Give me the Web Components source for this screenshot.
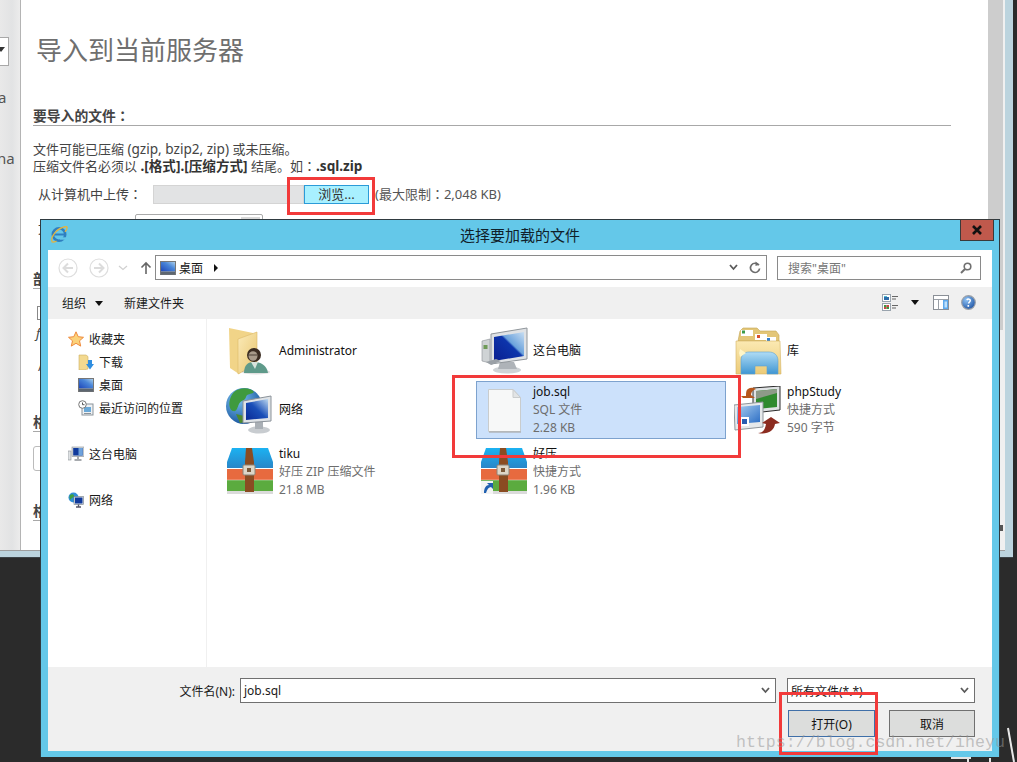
<!DOCTYPE html>
<html lang="zh">
<head>
<meta charset="utf-8">
<title>选择要加载的文件</title>
<style>
  html, body { margin: 0; height: 100%; background: #2b2b2b; overflow: hidden; }
  body { font-family: "Noto Sans", "Noto Sans CJK SC", sans-serif; font-size: 12px; color: #1a1a1a; }
</style>
</head>
<body>
<desk-top>
  <browser-window>
    <import-panel></import-panel>
  </browser-window>

  <file-dialog heading="选择要加载的文件"></file-dialog>

  <red-mark x="287" y="177" w="88" h="38"></red-mark>
  <red-mark x="452" y="375" w="289" h="83"></red-mark>
  <red-mark x="779" y="692" w="99" h="63"></red-mark>
</desk-top>

<script>
// icons are all hand drawn, 16px ones for the tree and 48px ones for the tiles
const ZIP_BODY = `<defs><linearGradient id="z" x1="0" y1="0" x2="0" y2="1"><stop offset="0" stop-color="#1bb2f2"/><stop offset="1" stop-color="#2a86c8"/></linearGradient></defs><path d="M6 0h36l5 14v6H1v-6z" fill="url(#z)"/><rect x="1" y="21" width="46" height="11" fill="#e76a3f"/><rect x="1" y="32" width="46" height="11" fill="#5bab3f"/><rect x="1" y="43" width="46" height="3" fill="#000" opacity=".14"/><path d="M1 20.500h46M1 32h46" stroke="#fff" stroke-width=".8" opacity=".5"/><path d="M20 0h6l2 14v30h-9V14z" fill="#8a4c22"/><rect x="17" y="17" width="12" height="10" rx="1" fill="#ddd6c8" stroke="#8c8478"/><rect x="21" y="20" width="4" height="4" fill="#7a5a3a"/>`;

const ICONS = {
  ie: `<svg viewBox="0 0 18 18" width="18" height="18"><circle cx="9" cy="9.500" r="6.200" fill="none" stroke="#2f7fc0" stroke-width="2.600"/><path d="M3 9.500h12" stroke="#2f7fc0" stroke-width="2"/><path d="M10 13.500h6" stroke="#64c8e9" stroke-width="2.400"/><path d="M2 16C.5 13 5 6 10 3.500 14 1.500 17 1 17 2.500c.3 1.300-1 3-2 4.200" fill="none" stroke="#e3b341" stroke-width="1.400"/><path d="M1.500 16.500c1 1 3 .5 5-.4" fill="none" stroke="#e3b341" stroke-width="1.400"/></svg>`,
  back: `<svg viewBox="0 0 20 20" width="20" height="20"><circle cx="10" cy="10" r="9" fill="#fff" stroke="#dedede" stroke-width="1.200"/><path d="M15 10H6M10 5.500 5.500 10l4.500 4.500" fill="none" stroke="#dcdcdc" stroke-width="2"/></svg>`,
  forward: `<svg viewBox="0 0 20 20" width="20" height="20"><circle cx="10" cy="10" r="9" fill="#fff" stroke="#dedede" stroke-width="1.200"/><path d="M5 10h9M10 5.500l4.500 4.500-4.500 4.500" fill="none" stroke="#dcdcdc" stroke-width="2"/></svg>`,
  down: `<svg viewBox="0 0 10 6" width="10" height="6"><path d="M1 1l4 3.500L9 1" fill="none" stroke="#d0d0d0" stroke-width="1.200"/></svg>`,
  up: `<svg viewBox="0 0 12 14" width="12" height="14"><path d="M6 13V2M1.500 6.500 6 2l4.500 4.500" fill="none" stroke="#666" stroke-width="1.600"/></svg>`,
  desk: `<svg viewBox="0 0 16 14" width="16" height="14"><defs><linearGradient id="d" x1="0" y1="1" x2="1" y2="0"><stop offset="0" stop-color="#1d45b8"/><stop offset=".6" stop-color="#4a86d8"/><stop offset="1" stop-color="#a8cdea"/></linearGradient></defs><rect x=".5" y=".5" width="15" height="13" fill="#eee" stroke="#777"/><rect x="1" y="1" width="14" height="9.500" fill="url(#d)"/><rect x="1" y="10.500" width="14" height="3" fill="#5d6670"/></svg>`,
  chev: `<svg viewBox="0 0 9 7" width="9" height="7"><path d="M1 1l3.500 4L8 1" fill="none" stroke="#5a5a5a" stroke-width="1.800"/></svg>`,
  refresh: `<svg viewBox="0 0 12 13" width="12" height="13"><path d="M9.800 4.200A4.600 4.600 0 1 0 10.600 7.500" fill="none" stroke="#6c6c6c" stroke-width="1.700"/><path d="M6.500 .5v4.500l4-1.500z" fill="#6c6c6c"/></svg>`,
  search: `<svg viewBox="0 0 12 12" width="12" height="12"><circle cx="7.500" cy="4.500" r="3.300" fill="none" stroke="#707070" stroke-width="1.600"/><path d="M5 7L1 11" stroke="#707070" stroke-width="2"/></svg>`,
  views: `<svg viewBox="0 0 17 17" width="17" height="17"><rect x=".5" y=".5" width="8" height="7" fill="#fff" stroke="#9aa4ae"/><rect x="2" y="3" width="5" height="3" fill="#2d6ca8"/><rect x="2" y="2" width="3" height="1" fill="#4fc0d8"/><rect x=".5" y="9.500" width="8" height="7" fill="#fff" stroke="#9aa4ae"/><rect x="2" y="11" width="2.500" height="2" fill="#3a9a40"/><rect x="4.500" y="11" width="2.500" height="2" fill="#c44"/><rect x="2" y="13" width="2.500" height="2" fill="#c44"/><rect x="4.500" y="13" width="2.500" height="2" fill="#3a9a40"/><path d="M10 2.500h6M10 5h4M10 11.500h6M10 14h4" stroke="#666"/></svg>`,
  pane: `<svg viewBox="0 0 16 15" width="16" height="15"><rect x=".5" y=".5" width="15" height="14" fill="#fff" stroke="#8a8f96"/><path d="M1 4.500h14M5.500 4.500V14.500" stroke="#9a9fa6"/><rect x="10" y="5" width="5" height="9" fill="#5ea9ec"/><rect x="11.500" y="6.500" width="2.500" height="6" fill="#bfe0fa"/></svg>`,
  help: `<svg viewBox="0 0 15 15" width="15" height="15"><defs><radialGradient id="h" cx=".35" cy=".3" r=".8"><stop offset="0" stop-color="#8fc3f5"/><stop offset="1" stop-color="#1a4fa0"/></radialGradient></defs><circle cx="7.500" cy="7.500" r="6.800" fill="url(#h)" stroke="#9aa0a8" stroke-width="1.200"/><path d="M5.800 5c1-1.500 3.700-1 3.500.7-.1 1.100-1.500 1.400-1.800 2.800" fill="none" stroke="#fff" stroke-width="1.500"/><rect x="6.500" y="10" width="1.600" height="1.800" fill="#fff"/></svg>`,
  star: `<svg viewBox="0 0 16 16" width="16" height="16"><path d="M8 .8l2.200 4.900 5.300.6-4 3.500 1.200 5.300L8 12.300 3.300 15.100l1.200-5.300-4-3.500 5.300-.6z" fill="#fbd27a" stroke="#ee8a3c" stroke-width="1"/></svg>`,
  dl: `<svg viewBox="0 0 16 16" width="16" height="16"><path d="M1 1h7l2 1.500V15L5 16H1z" fill="#f3d98f" stroke="#cfae62" stroke-width=".6"/><path d="M10 6h4v4h2l-4 5.500L8 10h2z" fill="#2f8ee0"/></svg>`,
  recent: `<svg viewBox="0 0 16 16" width="16" height="16"><rect x="4" y="4" width="11" height="11" fill="#eef1f4" stroke="#8b939a"/><rect x="6" y="7" width="7" height="5" fill="#6aa9d8"/><path d="M6 13.500h7" stroke="#8b939a"/><circle cx="4.500" cy="4.500" r="3.800" fill="#fff" stroke="#777"/><path d="M4.500 2.500v2.200H6.500" fill="none" stroke="#555"/></svg>`,
  pc: `<svg viewBox="0 0 16 16" width="16" height="16"><rect x="0" y="5" width="3" height="9" fill="#dfe2e4" stroke="#8a8f94" stroke-width=".6"/><rect x="4" y="1" width="12" height="9.500" fill="#d8dcdf" stroke="#8a8f94" stroke-width=".6"/><rect x="5.200" y="2" width="9.500" height="7.500" fill="#103a9c"/><rect x="10.500" y="2" width="4.200" height="7.500" fill="#6ea2dc"/><path d="M10 10.500v2.500M6.500 14h7" stroke="#8a8f94" stroke-width="1.500"/></svg>`,
  net: `<svg viewBox="0 0 16 16" width="16" height="16"><circle cx="5.500" cy="5.500" r="5" fill="#2f8fd8"/><path d="M2 3c2-1 4-1 4 1s-2 1-3 3S1 5 2 3zM6 8l3 1-2 1.500z" fill="#3fa040"/><rect x="6" y="4.500" width="9.500" height="8" fill="#dfe3e6" stroke="#6f7a84" stroke-width=".6"/><rect x="7" y="5.500" width="7.500" height="6" fill="#103a9c"/><path d="M10.500 12.500v2M8 15h5" stroke="#556" stroke-width="1.300"/></svg>`,

  folderUser: `<svg viewBox="0 0 48 48" width="48" height="48"><defs><linearGradient id="f" x1="0" y1="0" x2="1" y2="1"><stop offset="0" stop-color="#fbeab8"/><stop offset="1" stop-color="#e9c66f"/></linearGradient></defs><path d="M3 1l24 5v30L13 47 4 41z" fill="#f1d488"/><path d="M12 12l19-7v32L12 47z" fill="url(#f)" stroke="#dcb968" stroke-width=".6"/><ellipse cx="30" cy="45" rx="14" ry="2.500" fill="#000" opacity=".12"/><path d="M18 46c0-8 4-11 10-11s13 3 14 11z" fill="#5f9a8a"/><path d="M25 35l4 7 3-7z" fill="#d8e4dc"/><circle cx="28" cy="28" r="7" fill="#3b2c22"/><ellipse cx="27" cy="29" rx="4.500" ry="4.800" fill="#a89a8a"/><path d="M22 28h9" stroke="#4d4036"/></svg>`,
  globe: `<svg viewBox="0 0 48 48" width="48" height="48"><defs><radialGradient id="g" cx=".35" cy=".3" r=".8"><stop offset="0" stop-color="#7cc4f2"/><stop offset="1" stop-color="#0f4a96"/></radialGradient><linearGradient id="s" x1="0" y1="1" x2="1" y2="0"><stop offset="0" stop-color="#0a2a96"/><stop offset=".5" stop-color="#1a4fb8"/><stop offset="1" stop-color="#bcd8f0"/></linearGradient></defs><circle cx="18" cy="20" r="18" fill="url(#g)"/><path d="M8 6c6-5 16-5 20 0-3 3-7 1-8 5s-5 3-7 7-2 8-6 7S1 14 8 6z" fill="#3f9a3e"/><path d="M10 28l8 2 2 6-6 1z" fill="#4d8a2f"/><ellipse cx="33" cy="44" rx="11" ry="3.500" fill="#c8ccd0"/><rect x="29" y="36" width="8" height="7" fill="#aab0b6"/><path d="M17 15l28-5v25l-28 2z" fill="#dfe3e7" stroke="#8b9299"/><path d="M20 17l22-4v19l-22 2z" fill="url(#s)"/></svg>`,
  zip: `<svg viewBox="0 0 48 48" width="48" height="48">${ZIP_BODY}</svg>`,
  zipLink: `<svg viewBox="0 0 48 48" width="48" height="48">${ZIP_BODY}<rect x="1" y="33" width="12" height="13" fill="#f4f4f4"/><path d="M4 45c0-5 2-8 5-8l-2-2h6v6l-2-2c-2 0-4 2-5 6z" fill="#1f5fb0"/></svg>`,
  pcBig: `<svg viewBox="0 0 48 48" width="48" height="48"><defs><linearGradient id="p" x1="0" y1="1" x2="1" y2="0"><stop offset="0" stop-color="#0a1f90"/><stop offset=".55" stop-color="#0d35ac"/><stop offset=".6" stop-color="#6ba2dc"/><stop offset="1" stop-color="#c8def2"/></linearGradient></defs><path d="M2 14l8-2v24l-8-2z" fill="#cfd3d5" stroke="#8a8f93" stroke-width=".6"/><rect x="3.500" y="18" width="4" height="4" fill="#6f9a58"/><ellipse cx="27" cy="43" rx="14" ry="3.500" fill="#cfd3d6"/><path d="M20 35h14l3 7H18z" fill="#aeb3b8"/><path d="M11 7l36-6v31L11 37z" fill="#dfe2e5" stroke="#8f959a"/><path d="M14 10l30-5v24l-30 5z" fill="url(#p)"/><path d="M6 35l10-3 5 2-10 4z" fill="#9aa0a6"/></svg>`,
  file: `<svg viewBox="0 0 48 48" width="48" height="48"><path d="M8.500 3.500H33l7.500 8V45.500H8.500z" fill="#f7f8f8" stroke="#c9cccd"/><path d="M33 3.500v8h7.500z" fill="#e2e4e5" stroke="#c9cccd"/><path d="M9 46h32" stroke="#a8abac" stroke-width="1.200"/></svg>`,
  library: `<svg viewBox="0 0 48 48" width="48" height="48"><defs><linearGradient id="l" x1="0" y1="0" x2="0" y2="1"><stop offset="0" stop-color="#fbe9b2"/><stop offset="1" stop-color="#eccb78"/></linearGradient><linearGradient id="b" x1="0" y1="0" x2="0" y2="1"><stop offset="0" stop-color="#b0dcf5"/><stop offset="1" stop-color="#3f96d2"/></linearGradient></defs><path d="M6 4l3-3h14l3 3h16l3 4v6H4z" fill="#e3c678" stroke="#c5a655" stroke-width=".6"/><rect x="7" y="3" width="12" height="6" fill="#fff"/><rect x="8" y="3.500" width="3" height="3" fill="#3c9a4a"/><rect x="21" y="7" width="12" height="6" fill="#fff"/><rect x="23" y="8" width="3" height="3" fill="#d9502e"/><rect x="32" y="10" width="10" height="5" fill="#fff"/><rect x="33" y="11" width="3" height="3" fill="#2f7fd0"/><path d="M2 14h44l1 33H2z" fill="url(#l)" stroke="#d4b466" stroke-width=".6"/><path d="M7 47V34c0-6 3-9 8-9h20c5 0 9 3 9 9v13H33v-8H21v8z" fill="url(#b)" stroke="#5ea3d2" stroke-width=".6"/><path d="M6 22l6 4-6 4-1-4z" fill="#fff6c8"/></svg>`,
  php: `<svg viewBox="0 0 48 48" width="48" height="48"><defs><linearGradient id="m" x1="0" y1="0" x2="1" y2="1"><stop offset="0" stop-color="#a8cef0"/><stop offset="1" stop-color="#2a6cc4"/></linearGradient></defs><path d="M19 2l27-2v24l-27 3z" fill="#dfe2e4" stroke="#2c2c2c"/><path d="M22 5l21-2v18l-21 2z" fill="#2f8a2e"/><path d="M22 5l21-2v4L22 13z" fill="#8d9a88"/><path d="M14 3c3-2 6-1 8 0-3 1-5 3-5 6l4 3H9l-2-2h5c0-3 0-6 2-7z" fill="#b6571c"/><path d="M0 19l29-3v25L1 44z" fill="#e6e9eb" stroke="#8f959a"/><path d="M3 21l23-2v17L3 38z" fill="url(#m)"/><rect x="6" y="31" width="9" height="9" fill="#fff"/><rect x="8" y="33" width="5" height="5" fill="#2a5cb0"/><path d="M24 47c5 0 7-3 8-9l-4-1 9-6 9 6-5 1c-1 7-8 11-17 9z" fill="#8c2c20"/></svg>`
};

class WinIcon extends HTMLElement {
  connectedCallback() {
    this.attachShadow({ mode: 'open' });
    this.shadowRoot.innerHTML = `
      <style>:host { display: inline-flex; flex: none; } svg { display: block; }</style>
      ${ICONS[this.getAttribute('name')] || ''}
    `;
  }
}
customElements.define('win-icon', WinIcon);

class DeskTop extends HTMLElement {
  constructor() {
    super();
    this.attachShadow({ mode: 'open' });
    this.shadowRoot.innerHTML = `
      <style>
        :host { display: block; position: relative; width: 1017px; height: 762px; overflow: hidden; background: #2b2b2b; }
        .watermark {
          position: absolute; left: 736px; top: 732px;
          font: 16.600px/22px "Liberation Mono", monospace;
          color: rgba(150, 150, 150, .55);
          white-space: nowrap;
        }
        .scraps { position: absolute; left: 940px; top: 720px; }
        .grip { position: absolute; left: 1000px; top: 525px; width: 3px; height: 6px; background: #555; }
      </style>
      <slot></slot>
      <div class="grip"></div>
      <div class="watermark">https://blog.csdn.net/iheyu</div>
      <svg class="scraps" width="77" height="42" viewBox="0 0 77 42">
        <path d="M68 8l6 34" stroke="#e8e8e8" stroke-width="2"/>
        <path d="M11 38h20M28 38v4M50 38v4" stroke="#e4e4e4" stroke-width="2"/>
      </svg>
    `;
  }
}
customElements.define('desk-top', DeskTop);

class BrowserWindow extends HTMLElement {
  constructor() {
    super();
    this.attachShadow({ mode: 'open' });
    this.shadowRoot.innerHTML = `
      <style>
        :host { display: flex; width: 1013px; height: 558px; box-sizing: border-box; padding-bottom: 6px; background: #bcd4de; border-bottom: 1px solid #3c4347; }
        .frame { flex: 1; display: flex; min-width: 0; background: #fff; border-bottom: 1px solid #9e9e9e; margin-right: 8px; }
        .side {
          flex: none; width: 20px; border-right: 1px solid #b4b4b4; overflow: hidden; white-space: nowrap;
          background: linear-gradient(90deg, #e9e9e9, #e2e3e4 60%, #ececec);
          font-size: 15px; color: #555;
        }
        .side .combo { box-sizing: border-box; width: 30px; height: 29px; margin: 37px 0 0 -21px; border: 1px solid #a8a8a8; background: #fff; position: relative; }
        .side .combo::after { content: ""; position: absolute; right: 3px; top: 9px; border: 4px solid transparent; border-top: 5px solid #333; }
        .side .t1 { margin: 21px 0 0 -2px; line-height: 20px; }
        .side .t2 { margin: 41px 0 0 -3px; line-height: 20px; }
        .content { flex: 1; min-width: 0; overflow: hidden; }
        .track { flex: none; width: 17px; background: #f0f0f0; }
        .thumb { width: 15px; height: 330px; background: #cdcdcd; }
      </style>
      <div class="frame">
        <div class="side">
          <div class="combo"></div>
          <div class="t1">a</div>
          <div class="t2">na</div>
        </div>
        <div class="content"><slot></slot></div>
        <div class="track"><div class="thumb"></div></div>
      </div>
    `;
  }
}
customElements.define('browser-window', BrowserWindow);

class ImportPanel extends HTMLElement {
  constructor() {
    super();
    const colon = '<span class="c" lang="zh-TW">：</span>';
    this.attachShadow({ mode: 'open' });
    this.shadowRoot.innerHTML = `
      <style>
        :host { display: block; padding: 34px 37px 0 12px; color: #444; font-size: 13px; line-height: 17px; }
        h2 { margin: 0 0 0 3px; font-size: 26px; line-height: 32px; font-weight: 400; color: #6f6f6f; }
        h3 { margin: 0; font-size: 13.800px; line-height: 18px; font-weight: 700; color: #444; border-bottom: 1px solid #a8a8a8; }
        /* the colon sits mid height in the reference, the TC form has that */
        .c { font-family: "Noto Sans CJK TC", sans-serif; line-height: 1px; }
        .l { font-size: 13.600px; line-height: 1px; }
        .h-first { margin-top: 41px; }
        p { margin: 15px 0 0; }
        b { color: #333; }
        .row { display: flex; align-items: center; height: 19px; margin: 10px 0 0 5px; white-space: nowrap; }
        .row label { width: 115px; }
        .upload { display: flex; height: 19px; }
        .path { box-sizing: border-box; width: 151px; background: #e2e3e4; border: 1px solid #d4d4d4; }
        .browse { box-sizing: border-box; width: 65px; display: flex; align-items: center; justify-content: center; background: #a8f0ff; border: 1px solid #2b9bd8; color: #333; }
        .limit { margin-left: 6px; color: #555; }
        .charset { margin: 10px 0 0 5px; display: flex; white-space: nowrap; }
        .charset label { width: 97px; margin-top: 6px; }
        .select { box-sizing: border-box; width: 128px; height: 24px; border: 1px solid #aaa; border-radius: 2px; position: relative; background: #fff; }
        .select::after { content: ""; position: absolute; right: 2px; top: 2px; width: 19px; height: 18px; background: #d9d9d9; }
        .h2nd { margin-top: 32px; }
        .h3rd { margin-top: 38px; }
        .h4th { margin-top: 31px; }
        .chk { width: 10px; height: 12px; margin: 17px 0 0 4px; border: 1px solid #888; }
        .italic { font-style: italic; margin: 5px 0 0 3px; }
        .slash { margin: 16px 0 0 5px; }
        .field { box-sizing: border-box; width: 120px; height: 25px; margin-top: 14px; border: 1px solid #bbb; border-radius: 3px; }
      </style>
      <h2>导入到当前服务器</h2>
      <h3 class="h-first">要导入的文件${colon}</h3>
      <p>文件可能已压缩 <span class="l">(gzip, bzip2, zip)</span> 或未压缩。<br>压缩文件名必须以 <b class="l">.[格式].[压缩方式]</b> 结尾。如${colon}<b class="l">.sql.zip</b></p>
      <div class="row">
        <label>从计算机中上传${colon}</label>
        <div class="upload"><div class="path"></div><div class="browse">浏览...</div></div>
        <span class="limit">(最大限制${colon}2,048 KB)</span>
      </div>
      <div class="charset"><label>文件的字符集：</label><div class="select"></div></div>
      <h3 class="h2nd">部分导入：</h3>
      <div class="chk"></div>
      <div class="italic">f</div>
      <div class="slash">/</div>
      <h3 class="h3rd">格式：</h3>
      <div class="field"></div>
      <h3 class="h4th">格式选项</h3>
    `;
  }
}
customElements.define('import-panel', ImportPanel);

class FileTile extends HTMLElement {
  connectedCallback() {
    this.attachShadow({ mode: 'open' });
    const lines = [this.getAttribute('type'), this.getAttribute('size')].filter(Boolean);
    this.shadowRoot.innerHTML = `
      <style>
        :host { display: flex; align-items: center; box-sizing: border-box; height: 58px; padding-left: 3px; gap: 5px; border: 1px solid transparent; font-size: 12px; line-height: 18px; }
        :host([selected]) { background: #cce1fb; border-color: #7da2ce; }
        .name { color: #111; }
        .meta { color: #6d6d6d; }
        .txt { white-space: nowrap; margin-top: -1px; }
      </style>
      <win-icon name="${this.getAttribute('icon')}"></win-icon>
      <div class="txt">
        <div class="name">${this.getAttribute('name')}</div>
        ${lines.map(l => `<div class="meta">${l}</div>`).join('')}
      </div>
    `;
  }
}
customElements.define('file-tile', FileTile);

class DlgButton extends HTMLElement {
  constructor() {
    super();
    this.attachShadow({ mode: 'open' });
    this.shadowRoot.innerHTML = `
      <style>
        :host { display: flex; align-items: center; justify-content: center; box-sizing: border-box; width: 86px; height: 27px; background: #dcdddc; border: 1px solid #707070; font-size: 12px; color: #111; }
        :host([primary]) { border-color: #3f6fa8; width: 87px; }
      </style>
      <slot></slot>
    `;
  }
}
customElements.define('dlg-button', DlgButton);

class FileDialog extends HTMLElement {
  connectedCallback() {
    this.attachShadow({ mode: 'open' });
    this.shadowRoot.innerHTML = `
      <style>
        :host {
          position: absolute; left: 40px; top: 219px; width: 960px; height: 538px;
          box-sizing: border-box; display: flex; flex-direction: column;
          background: #64c8e9; border: 1px solid #2f3a40; border-bottom: 0;
          padding: 0 7px 6px; font-size: 12px; color: #1a1a1a;
        }
        .title { flex: none; height: 30px; box-sizing: border-box; padding-bottom: 2px; display: flex; align-items: center; justify-content: center; font-size: 15px; color: #10202a; position: relative; }
        .title win-icon { position: absolute; left: 2px; top: 5px; }
        .close {
          position: absolute; right: 5px; top: -1px; width: 34px; height: 22px; box-sizing: border-box;
          background: #c0594c; border: 1px solid #3a3a3a; display: flex; align-items: center; justify-content: center;
        }
        .addr { flex: none; height: 37px; box-sizing: border-box; padding: 0 0 2px 10px; display: flex; align-items: center; background: #fff; }
        .addr .arrow2 { margin-left: 11px; }
        .addr .drop { margin: 0 0 0 9px; }
        .addr .upbtn { margin-left: 12px; }
        .crumbs {
          box-sizing: border-box; width: 612px; height: 25px; margin-left: 3px; padding: 0 5px 0 4px;
          display: flex; align-items: center; border: 1px solid #8a8a8a;
        }
        .crumbs .place { margin-left: 3px; }
        .crumbs .tri { margin-left: 11px; width: 0; height: 0; border: 4px solid transparent; border-left: 4px solid #111; border-right: 0; }
        .crumbs .end { margin-left: auto; display: flex; align-items: center; gap: 11px; }
        .search {
          box-sizing: border-box; width: 204px; height: 24px; margin-left: 10px; padding: 0 8px 0 10px;
          display: flex; align-items: center; justify-content: space-between; border: 1px solid #8a8a8a; color: #777;
        }
        .cmds { flex: none; height: 32px; display: flex; align-items: center; background: #f0f0f0; padding: 0 16px 0 14px; }
        .caret { width: 0; height: 0; border: 4px solid transparent; border-top: 5px solid #111; border-bottom: 0; }
        .cmds .newf { margin-left: 21px; }
        .cmds .organize + .caret { margin-left: 9px; }
        .cmds .right { margin-left: auto; margin-top: -2px; display: flex; align-items: center; }
        .cmds .right .caret { margin: 0 14px 0 12px; }
        .cmds .right .hb { margin-left: 12px; }
        .body { flex: 1; min-height: 0; display: flex; background: #fff; }
        .nav { flex: none; width: 138px; border-right: 1px solid #f0f0f0; padding: 8px 0 0 20px; }
        .nav .n { display: flex; align-items: center; gap: 5px; height: 23px; white-space: nowrap; }
        .nav .sub { padding-left: 10px; }
        .nav .gap { margin-top: 23px; }
        .grid { flex: 1; display: grid; grid-template-columns: repeat(3, 250px); column-gap: 4px; grid-template-rows: 59px 62px 58px; align-items: start; align-content: start; padding: 3px 0 0 15px; }
        .bottom { flex: none; height: 84px; background: #f0f0f0; box-sizing: border-box; padding: 11px 17px 0 0; }
        .brow { display: flex; justify-content: flex-end; align-items: center; }
        .brow + .brow { margin-top: 7px; gap: 14px; }
        .input { box-sizing: border-box; height: 25px; display: flex; align-items: center; justify-content: space-between; border: 1px solid #707070; background: #fff; padding: 0 5px 0 3px; }
        .input.name { width: 536px; margin-left: 5px; }
        .input.kind { width: 188px; margin-left: 11px; }
      </style>
      <div class="title">
        <win-icon name="ie"></win-icon>
        <span>${this.getAttribute('heading')}</span>
      </div>
      <div class="close">
        <svg width="12" height="10" viewBox="0 0 12 10"><path d="M2 1l8 8M10 1L2 9" stroke="#111" stroke-width="2.600"/></svg>
      </div>
      <div class="addr">
        <win-icon name="back"></win-icon>
        <win-icon name="forward" class="arrow2"></win-icon>
        <win-icon name="down" class="drop"></win-icon>
        <win-icon name="up" class="upbtn"></win-icon>
        <div class="crumbs">
          <win-icon name="desk"></win-icon>
          <span class="place">桌面</span>
          <span class="tri"></span>
          <span class="end"><win-icon name="chev"></win-icon><win-icon name="refresh"></win-icon></span>
        </div>
        <div class="search"><span>搜索"桌面"</span><win-icon name="search"></win-icon></div>
      </div>
      <div class="cmds">
        <span class="organize">组织</span><span class="caret"></span>
        <span class="newf">新建文件夹</span>
        <div class="right">
          <win-icon name="views"></win-icon><span class="caret"></span>
          <win-icon name="pane"></win-icon><win-icon name="help" class="hb"></win-icon>
        </div>
      </div>
      <div class="body">
        <div class="nav">
          <div class="n"><win-icon name="star"></win-icon>收藏夹</div>
          <div class="n sub"><win-icon name="dl"></win-icon>下载</div>
          <div class="n sub"><win-icon name="desk"></win-icon>桌面</div>
          <div class="n sub"><win-icon name="recent"></win-icon>最近访问的位置</div>
          <div class="n gap"><win-icon name="pc"></win-icon>这台电脑</div>
          <div class="n gap"><win-icon name="net"></win-icon>网络</div>
        </div>
        <div class="grid">
          <file-tile icon="folderUser" name="Administrator"></file-tile>
          <file-tile icon="pcBig" name="这台电脑"></file-tile>
          <file-tile icon="library" name="库"></file-tile>
          <file-tile icon="globe" name="网络"></file-tile>
          <file-tile icon="file" name="job.sql" type="SQL 文件" size="2.28 KB" selected></file-tile>
          <file-tile icon="php" name="phpStudy" type="快捷方式" size="590 字节"></file-tile>
          <file-tile icon="zip" name="tiku" type="好压 ZIP 压缩文件" size="21.8 MB"></file-tile>
          <file-tile icon="zipLink" name="好压" type="快捷方式" size="1.96 KB"></file-tile>
        </div>
      </div>
      <div class="bottom">
        <div class="brow">
          <span>文件名(N):</span>
          <div class="input name"><span>job.sql</span><win-icon name="chev"></win-icon></div>
          <div class="input kind"><span>所有文件(*.*)</span><win-icon name="chev"></win-icon></div>
        </div>
        <div class="brow">
          <dlg-button primary>打开(O)</dlg-button>
          <dlg-button>取消</dlg-button>
        </div>
      </div>
    `;
  }
}
customElements.define('file-dialog', FileDialog);

class RedMark extends HTMLElement {
  connectedCallback() {
    this.attachShadow({ mode: 'open' });
    this.shadowRoot.innerHTML = `<style>
      :host {
        position: absolute; box-sizing: border-box; border: 3px solid #f23a3a;
        left: ${this.getAttribute('x')}px; top: ${this.getAttribute('y')}px;
        width: ${this.getAttribute('w')}px; height: ${this.getAttribute('h')}px;
      }
    </style>`;
  }
}
customElements.define('red-mark', RedMark);
</script>
</body>
</html>
